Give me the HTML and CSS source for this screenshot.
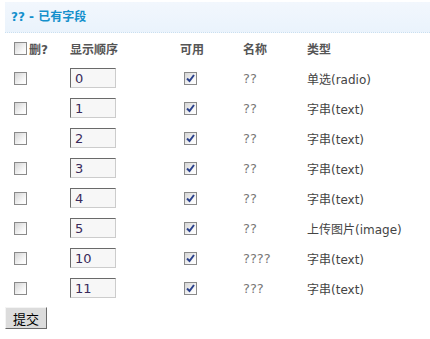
FILE: index.html
```html
<!DOCTYPE html>
<html lang="zh">
<head>
  <meta charset="UTF-8">
  <title>已有字段</title>
  <link rel="stylesheet" href="styles.css">
</head>
<body>
  <div class="box">
    <div class="box-head">?? - 已有字段</div>
    <form class="box-body">
      <table class="fields">
        <thead>
          <tr>
            <th class="c-del"><label><input type="checkbox" class="chk"> 删?</label></th>
            <th class="c-order">显示顺序</th>
            <th class="c-on">可用</th>
            <th class="c-name">名称</th>
            <th class="c-type">类型</th>
          </tr>
        </thead>
        <tbody>
          <tr><td><input type="checkbox" class="chk"></td><td><input class="num" value="0"></td><td><input type="checkbox" class="chk" checked></td><td class="name">??</td><td>单选(radio)</td></tr>
          <tr><td><input type="checkbox" class="chk"></td><td><input class="num" value="1"></td><td><input type="checkbox" class="chk" checked></td><td class="name">??</td><td>字串(text)</td></tr>
          <tr><td><input type="checkbox" class="chk"></td><td><input class="num" value="2"></td><td><input type="checkbox" class="chk" checked></td><td class="name">??</td><td>字串(text)</td></tr>
          <tr><td><input type="checkbox" class="chk"></td><td><input class="num" value="3"></td><td><input type="checkbox" class="chk" checked></td><td class="name">??</td><td>字串(text)</td></tr>
          <tr><td><input type="checkbox" class="chk"></td><td><input class="num" value="4"></td><td><input type="checkbox" class="chk" checked></td><td class="name">??</td><td>字串(text)</td></tr>
          <tr><td><input type="checkbox" class="chk"></td><td><input class="num" value="5"></td><td><input type="checkbox" class="chk" checked></td><td class="name">??</td><td>上传图片(image)</td></tr>
          <tr><td><input type="checkbox" class="chk"></td><td><input class="num" value="10"></td><td><input type="checkbox" class="chk" checked></td><td class="name">????</td><td>字串(text)</td></tr>
          <tr><td><input type="checkbox" class="chk"></td><td><input class="num" value="11"></td><td><input type="checkbox" class="chk" checked></td><td class="name">???</td><td>字串(text)</td></tr>
        </tbody>
      </table>
      <button type="button" class="btn">提交</button>
    </form>
  </div>
</body>
</html>
```

FILE: styles.css
```css
body {
  margin: 0;
  padding: 2px 0 0 5px;
  background: #ffffff;
  color: #444;
  font-family: Verdana, "DejaVu Sans", "Noto Sans CJK SC", sans-serif;
  font-size: 12px;
}

.box-head {
  height: 30px;
  line-height: 30px;
  padding-left: 6px;
  background: linear-gradient(to bottom, #f2f7fd, #eaf3fc);
  border-bottom: 1px dotted #c9dff0;
  color: #1590cc;
  font-weight: bold;
  font-size: 12px;
}

.box-body {
  margin: 0;
}

.fields {
  border-collapse: collapse;
  margin-left: 5px;
}

.fields th,
.fields td {
  height: 30px;
  padding: 0 0 0 4px;
  text-align: left;
  vertical-align: middle;
  white-space: nowrap;
}

.fields th {
  font-weight: bold;
  color: #555;
}

.c-del { width: 52px; }
.c-order { width: 106px; }
.c-on { width: 59px; }
.c-name { width: 60px; }
.c-type { width: 110px; }

.fields label {
  display: flex;
  align-items: center;
  gap: 2px;
}

.name {
  color: #777;
  font-size: 13px;
}

.chk {
  appearance: none;
  -webkit-appearance: none;
  width: 13px;
  height: 13px;
  margin: 0;
  vertical-align: middle;
  border: 1px solid #8a8a8a;
  background: linear-gradient(135deg, #d4d4d4, #f8f8f8 70%, #ffffff);
  box-sizing: border-box;
}

.fields td .chk {
  display: block;
}

.fields td:nth-child(3) .chk {
  margin-left: 4px;
}

.chk:checked {
  background:
    url("data:image/svg+xml,%3Csvg xmlns='http://www.w3.org/2000/svg' width='11' height='11'%3E%3Cpath d='M2 5.5 L4.5 8 L9 2' fill='none' stroke='%232a418c' stroke-width='2'/%3E%3C/svg%3E") center / 11px 11px no-repeat,
    linear-gradient(135deg, #d4d4d4, #f8f8f8 70%, #ffffff);
}

.num {
  display: block;
  width: 46px;
  height: 20px;
  box-sizing: border-box;
  margin: 0;
  padding: 0 0 0 4px;
  border: 1px solid;
  border-color: #6a6a6a #cccccc #cccccc #6a6a6a;
  background: #f7f7f7;
  color: #3a2a5a;
  font-family: Verdana, "DejaVu Sans", sans-serif;
  font-size: 13px;
}

.btn {
  display: block;
  margin-top: 4px;
  width: 42px;
  height: 22px;
  padding: 0;
  border: 1px solid;
  border-color: #f4f4f4 #6a6a6a #6a6a6a #f4f4f4;
  background: #dcdcdc;
  color: #000;
  font-family: "Noto Sans CJK SC", sans-serif;
  font-size: 13px;
}
```
